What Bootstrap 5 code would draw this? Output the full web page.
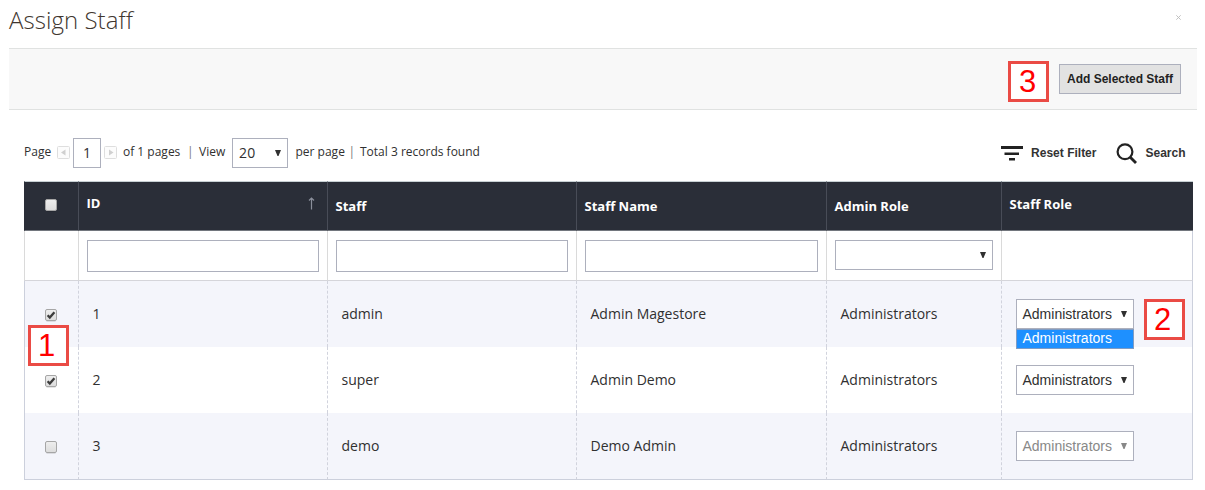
<!DOCTYPE html>
<html lang="en">
<head>
<meta charset="utf-8">
<meta name="viewport" content="width=device-width, initial-scale=1">
<title>Assign Staff</title>
<link href="https://cdn.jsdelivr.net/npm/bootstrap@5.3.0/dist/css/bootstrap.min.css" rel="stylesheet">
<style>
body{font-family:"Open Sans",sans-serif;color:#303030;background:#fff;overflow:hidden;height:490px}
.arial{font-family:"Liberation Sans",Arial,sans-serif}
.page-head{height:48px;padding:0 24px 0 9px}
.page-head h1{font-size:24px;font-weight:300;line-height:40px;color:#41362f;letter-spacing:.05px}
.close-x{width:5px;height:5px;margin-top:15px}
.toolbar{height:62px;margin:0 8px 0 9px;padding:0 16px 0 0;background:#f8f8f8;border-top:1px solid #e0e2e1;border-bottom:1px solid #e0e2e1}
.btn-add{width:122px;height:30px;padding:0;border:1px solid #adb0bd;border-radius:0;background:#e2e2e2;color:#222;font-size:12px;font-weight:700;line-height:29px;white-space:nowrap}
.step{width:41px;height:41px;border:3px solid #ea4b45;background:#fff;color:#f00;font-size:31px;line-height:35px;padding-right:4px;text-align:center;font-family:"Liberation Sans",Arial,sans-serif}
.toolbar .step{margin:5px 10px 0 0;padding-right:2px}
.step-one{position:absolute;left:4px;top:144px;z-index:2}
.controls{height:71px;padding:28px 0 0 24px}
.pager{display:grid;grid-template-columns:33px 16px 31px 19px 64px 12px 33px 63.5px 53px 11.5px auto;font-size:12px;line-height:28px;white-space:nowrap;align-items:start}
.pager>svg{margin-top:8px}
.pager .bar{color:#777}
.box{border:1px solid #adb0bd;background:#fff;height:30px;color:#303030}
.page-no{width:28px;text-align:center;font-size:14px;line-height:28px}
.per{width:56px;padding:0 6px;font-size:14px;line-height:28px;letter-spacing:.2px}
.actions{font-size:12px;font-weight:700;color:#333;line-height:30px;padding-right:19.5px}
.staff-grid{width:1169px;margin:0 0 0 24px;position:relative}
.staff-grid table{table-layout:fixed;border-collapse:separate;border-spacing:0;width:1169px;margin:0;color:#303030;font-size:14px}
.staff-grid th,.staff-grid td{box-shadow:none!important}
.staff-grid thead th{height:50px;padding:14px 0 0 7.5px;background:#2a2e38;border:0;border-left:1px solid #484c57;border-top:1px solid #c7d0d3;border-bottom:1px solid #72767d;color:#fff;font-size:13px;font-weight:700;line-height:20px;vertical-align:top}
.staff-grid thead th:first-child{border-left-color:#2a2e38;padding:17px 0 0}
.staff-grid thead th.sorted{padding:11px 12px 0 7.5px}
.staff-grid thead th:last-child{padding-top:12px}
.staff-grid .filters td{height:50px;padding:9px 8px 0 8px;border:0;border-left:1px solid #dadada;border-bottom:1px solid #d5d5da;background:#fff;vertical-align:top}
.filters input{display:block;width:100%;height:32px;border:1px solid #adb0bd;padding:0;outline:0}
.filters .box{padding-right:6px}
.staff-grid .person td{height:66px;padding:0 0 0 13.5px;border:0;border-left:1px dashed #d1d3dd;vertical-align:middle;background:#fff;line-height:20px}
.staff-grid .person td:last-child{padding-left:14px}
.staff-grid .person.odd td{background:#f4f5fb}
.staff-grid .person td:first-child{border-left:1px solid #ccd0dc;padding:2px 0 0}
.staff-grid tr td:last-child{border-right:1px solid #ccd0dc}
.staff-grid .person:last-child td{height:67px;border-bottom:1px solid #ccd0dc}
.check{display:block;margin:0 auto 0 20px}
.role{width:118px;padding:0 6px 0 5.5px;font-size:14px;line-height:28px;position:relative;color:#303030}
.role.off{color:#888}
.role-list{position:absolute;left:-1px;top:29px;width:118px;height:20px;border:1px solid #7f9cc4;background:#1e90ff;color:#fff;line-height:17px;padding-left:5.5px;z-index:3}
.role-row{height:41px}
.role-row .step{margin:11px 0 0 10px}
</style>
</head>
<body>
<svg width="0" height="0" class="position-absolute">
<defs>
<linearGradient id="g" x1="0" y1="0" x2="0" y2="1"><stop offset="0" stop-color="#eee"/><stop offset="1" stop-color="#dcdcdc"/></linearGradient>
<symbol id="cb" viewBox="0 0 12 13"><path d="M1.5 12.5h9" stroke="#000" stroke-opacity=".1"/><rect x=".5" y=".5" width="11" height="11" rx="1.5" fill="url(#g)" stroke="#a6a6a6"/></symbol>
<symbol id="tick" viewBox="0 0 12 13"><path d="M2.6 6.3 4.8 8.6 9.4 3.2" fill="none" stroke="#3c3c3c" stroke-width="2.3"/></symbol>
<symbol id="tri" viewBox="0 0 6 6"><path d="M0 0h6L3.5 6h-1z" fill="currentColor"/></symbol>
</defs>
</svg>
<header class="page-head d-flex justify-content-between align-items-start">
<h1 class="m-0">Assign Staff</h1>
<svg class="close-x" viewBox="0 0 5 5"><path d="M.3.3l4.4 4.4M4.7.3.3 4.7" stroke="#bbb" stroke-width=".9"/></svg>
</header>
<div class="toolbar d-flex justify-content-end align-items-center">
<div class="step">3</div>
<button type="button" class="btn btn-add arial">Add Selected Staff</button>
</div>
<div class="controls d-flex justify-content-between align-items-start">
<div class="pager">
<span>Page</span>
<svg width="13" height="13"><rect x=".5" y=".5" width="12" height="12" rx="1" fill="#fcfcfc" stroke="#dedede"/><path d="M8.5 3.5v6L4 6.5z" fill="#d0d0d0"/></svg>
<span class="box page-no">1</span>
<svg width="13" height="13"><rect x=".5" y=".5" width="12" height="12" rx="1" fill="#fcfcfc" stroke="#dedede"/><path d="M5 3.5v6l4.500-3z" fill="#d0d0d0"/></svg>
<span>of 1 pages</span><span class="bar">|</span><span>View</span>
<span class="box per d-flex justify-content-between align-items-center">20<svg width="6" height="6"><use href="#tri"/></svg></span>
<span>per page</span><span class="bar">|</span><span>Total 3 records found</span>
</div>
<div class="actions arial d-flex align-items-center">
<svg width="22" height="15" class="me-2" fill="#222"><path d="M0 0h22v3H0zM3.500 6.500h14.500v2.500H3.500zM8 12h6v2.500H8z"/></svg>
<span>Reset Filter</span>
<svg width="21" height="21" viewBox="0 0 21 21" fill="none" stroke="#222" style="margin-left:20px"><circle cx="9" cy="8.800" r="7.400" stroke-width="2.200"/><path d="m14 14 6 6" stroke-width="2.800"/></svg>
<span class="ms-2">Search</span>
</div>
</div>
<main class="staff-grid">
<div class="step step-one">1</div>
<table class="table">
<colgroup><col style="width:54px"><col style="width:249px"><col style="width:249px"><col style="width:250px"><col style="width:175px"><col style="width:192px"></colgroup>
<thead><tr>
<th><svg class="check" width="12" height="13"><use href="#cb"/></svg></th>
<th class="sorted"><div class="d-flex justify-content-between">ID<svg width="7" height="13" class="mt-1" viewBox="0 0 7 13"><path d="M3.500 12.500V1M1 3.500 3.500 1 6 3.500" fill="none" stroke="#8b8f9b" stroke-width="1.200"/></svg></div></th>
<th>Staff</th>
<th>Staff Name</th>
<th>Admin Role</th>
<th>Staff Role</th>
</tr></thead>
<tbody>
<tr class="filters"><td></td><td><input></td><td><input></td><td><input></td>
<td><div class="box d-flex justify-content-end align-items-center"><svg width="6" height="6"><use href="#tri"/></svg></div></td><td></td></tr>
<tr class="person odd"><td><svg class="check" width="12" height="13"><use href="#cb"/><use href="#tick"/></svg></td><td>1</td><td>admin</td><td>Admin Magestore</td><td>Administrators</td>
<td><div class="role-row d-flex align-items-center"><div class="box role arial d-flex justify-content-between align-items-center">Administrators<svg width="6" height="6"><use href="#tri"/></svg><div class="role-list">Administrators</div></div><div class="step">2</div></div></td></tr>
<tr class="person"><td><svg class="check" width="12" height="13"><use href="#cb"/><use href="#tick"/></svg></td><td>2</td><td>super</td><td>Admin Demo</td><td>Administrators</td>
<td><div class="box role arial d-flex justify-content-between align-items-center">Administrators<svg width="6" height="6"><use href="#tri"/></svg></div></td></tr>
<tr class="person odd"><td><svg class="check" width="12" height="13"><use href="#cb"/></svg></td><td>3</td><td>demo</td><td>Demo Admin</td><td>Administrators</td>
<td><div class="box role off arial d-flex justify-content-between align-items-center">Administrators<svg width="6" height="6"><use href="#tri"/></svg></div></td></tr>
</tbody>
</table>
</main>
<script src="https://cdn.jsdelivr.net/npm/bootstrap@5.3.0/dist/js/bootstrap.bundle.min.js"></script>
</body>
</html>
